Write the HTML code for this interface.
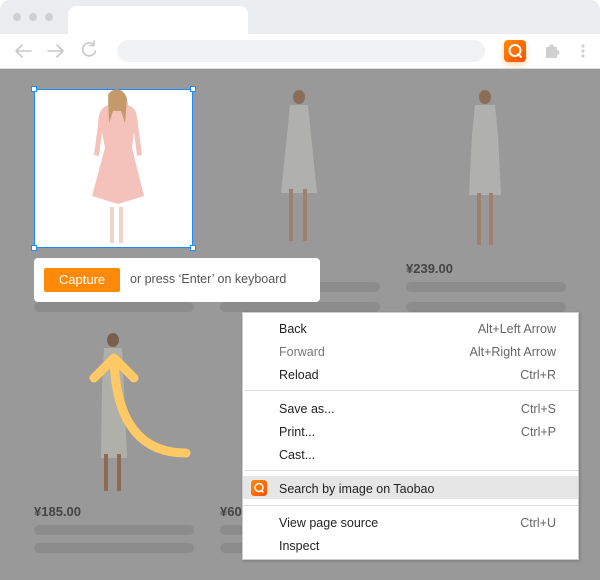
<!DOCTYPE html>
<html><head><meta charset="utf-8"><style>
*{margin:0;padding:0;box-sizing:border-box}
body{width:600px;height:580px;overflow:hidden;background:#fff;font-family:"Liberation Sans",sans-serif;position:relative}
.a{position:absolute}
.bar{position:absolute;height:10px;border-radius:5px;background:#8c8c8c}
.price{position:absolute;font-weight:bold;font-size:13px;color:#444}
.mi{position:absolute;left:279px;font-size:12.5px;color:#222}
.sc{position:absolute;right:44px;font-size:12.5px;color:#666;text-align:right}
.sep{position:absolute;left:244px;width:334px;height:1px;background:#ddd}
</style></head><body>
<div class="a" style="left:0;top:0;width:600px;height:35px;background:#ebedf1;border-radius:10px 10px 0 0"></div>
<div class="a" style="left:13px;top:13px;width:8px;height:8px;border-radius:50%;background:#cfcfd3"></div>
<div class="a" style="left:29px;top:13px;width:8px;height:8px;border-radius:50%;background:#cfcfd3"></div>
<div class="a" style="left:45px;top:13px;width:8px;height:8px;border-radius:50%;background:#cfcfd3"></div>
<div class="a" style="left:68px;top:6px;width:180px;height:30px;background:#fff;border-radius:8px 8px 0 0"></div>
<div class="a" style="left:0;top:34px;width:600px;height:35px;background:#fff;border-bottom:1px solid #ddd"></div>
<svg class="a" style="left:0;top:34px" width="600" height="35">
<g stroke="#c8c8c8" stroke-width="1.6" fill="none" stroke-linecap="round">
<path d="M16 17h15M16 17l6-6M16 17l6 6"/>
<path d="M48 17h15M63 17l-6-6M63 17l-6 6"/>
<path d="M94 11a6.5 6.5 0 1 0 1.5 6M94 7v4.5h-4.5"/>
</g>
</svg>
<div class="a" style="left:117px;top:40px;width:368px;height:22px;background:#f1f2f4;border-radius:11px"></div>
<div class="a" style="left:504px;top:40px;width:22px;height:22px;background:linear-gradient(135deg,#ff8a00,#ff5000);border-radius:4px;box-shadow:0 3px 6px rgba(255,120,0,.3)"></div>
<svg class="a" style="left:504px;top:40px" width="22" height="22"><circle cx="11" cy="10.5" r="5.5" stroke="#fff" stroke-width="2" fill="none"/><path d="M14 14l3 3" stroke="#fff" stroke-width="2" stroke-linecap="round"/></svg>
<svg class="a" style="left:540px;top:40px" width="60" height="22"><g fill="#d0d0d0"><path d="M6 7h3a2.5 2.5 0 0 1 5 0h3v3a2.5 2.5 0 0 1 0 5v3H6z"/><circle cx="43" cy="6" r="1.6"/><circle cx="43" cy="11" r="1.6"/><circle cx="43" cy="16" r="1.6"/></g></svg>
<div class="a" style="left:0;top:69px;width:600px;height:511px;background:#999"></div>
<svg class="a" style="left:0;top:69px" width="600" height="511">
<g fill="#b0b0ae"><ellipse cx="299" cy="28" rx="6" ry="7" fill="#8a6e58"/><path d="M290 36h18l3 30 6 58h-36l6-58z"/><rect x="289" y="120" width="4" height="52" fill="#9e8070"/><rect x="303" y="120" width="4" height="52" fill="#9e8070"/></g>
<g fill="#b0b0ae"><ellipse cx="485" cy="28" rx="6" ry="7" fill="#8a6e58"/><path d="M475 36h20l3 30 3 60h-32l3-60z"/><rect x="477" y="124" width="4" height="52" fill="#9e8070"/><rect x="489" y="124" width="4" height="52" fill="#9e8070"/></g>
<g fill="#b0b0aa"><ellipse cx="113" cy="271" rx="6" ry="7" fill="#7a604c"/><path d="M104 279h18l2 40 3 70h-26l1-70z"/><rect x="104" y="385" width="4" height="37" fill="#8d6a50"/><rect x="117" y="385" width="4" height="37" fill="#8d6a50"/></g>
</svg>
<div class="a" style="left:34px;top:89px;width:159px;height:159px;background:#fff;border:1.5px solid #1a8cff"></div>
<svg class="a" style="left:34px;top:89px" width="159" height="159">
<path d="M82 6c-5 0-8 4-8 10-7 3-9 6-10 20l-4 30 5 1 3-24 3 16-13 48 26 8 26-8-12-48 2-16 3 24 5-1-4-30c-1-14-3-17-10-20 0-6-3-10-8-10z" fill="#f4c2bb"/>
<path d="M74 6c4-8 16-8 19 4l-2 24-4-12-8 0-4 12z" fill="#c49a6a"/>
<rect x="76" y="118" width="4" height="36" fill="#efd4c8"/><rect x="85" y="118" width="4" height="36" fill="#efd4c8"/>
</svg>
<div class="a" style="left:31px;top:86px;width:6px;height:6px;background:#fff;border:1.5px solid #1a8cff"></div>
<div class="a" style="left:190px;top:86px;width:6px;height:6px;background:#fff;border:1.5px solid #1a8cff"></div>
<div class="a" style="left:31px;top:245px;width:6px;height:6px;background:#fff;border:1.5px solid #1a8cff"></div>
<div class="a" style="left:190px;top:245px;width:6px;height:6px;background:#fff;border:1.5px solid #1a8cff"></div>
<div class="bar" style="left:34px;top:302px;width:160px"></div>
<div class="bar" style="left:220px;top:282px;width:160px"></div>
<div class="bar" style="left:220px;top:302px;width:160px"></div>
<div class="price" style="left:406px;top:261px">¥239.00</div>
<div class="bar" style="left:406px;top:282px;width:160px"></div>
<div class="bar" style="left:406px;top:302px;width:160px"></div>
<div class="price" style="left:34px;top:504px">¥185.00</div>
<div class="bar" style="left:34px;top:525px;width:160px"></div>
<div class="bar" style="left:34px;top:543px;width:160px"></div>
<div class="price" style="left:220px;top:504px">¥60</div>
<div class="bar" style="left:220px;top:525px;width:160px"></div>
<div class="bar" style="left:220px;top:543px;width:160px"></div>
<svg class="a" style="left:80px;top:345px" width="120" height="125"><path d="M106 108c-40 0-70-24-72-94M14 33l20-20 20 20" stroke="#ffc966" stroke-width="9" fill="none" stroke-linecap="round" stroke-linejoin="round"/></svg>
<div class="a" style="left:34px;top:258px;width:286px;height:44px;background:#fff;border-radius:4px"></div>
<div class="a" style="left:44px;top:268px;width:76px;height:24px;background:#ff8a0a;border-radius:2px;color:#fff;font-size:13px;line-height:24px;text-align:center">Capture</div>
<div class="a" style="left:130px;top:272px;font-size:12.5px;color:#555">or press ‘Enter’ on keyboard</div>
<div class="a" style="left:242px;top:312px;width:337px;height:248px;background:#fff;border:1px solid #ccc;box-shadow:1px 1px 3px rgba(0,0,0,.2)"></div>
<div class="mi" style="top:322px">Back</div><div class="sc" style="top:322px">Alt+Left Arrow</div>
<div class="mi" style="top:345px;color:#777">Forward</div><div class="sc" style="top:345px">Alt+Right Arrow</div>
<div class="mi" style="top:368px">Reload</div><div class="sc" style="top:368px">Ctrl+R</div>
<div class="sep" style="top:390px"></div>
<div class="mi" style="top:402px">Save as...</div><div class="sc" style="top:402px">Ctrl+S</div>
<div class="mi" style="top:425px">Print...</div><div class="sc" style="top:425px">Ctrl+P</div>
<div class="mi" style="top:448px">Cast...</div>
<div class="sep" style="top:470px"></div>
<div class="a" style="left:243px;top:476px;width:335px;height:23px;background:#e6e6e6"></div>
<div class="a" style="left:251px;top:480px;width:16px;height:16px;background:linear-gradient(135deg,#ff8a00,#ff5000);border-radius:3px"></div>
<svg class="a" style="left:251px;top:480px" width="16" height="16"><circle cx="8" cy="7.5" r="4" stroke="#fff" stroke-width="1.5" fill="none"/><path d="M10 10l2.5 2.5" stroke="#fff" stroke-width="1.5"/></svg>
<div class="mi" style="top:482px">Search by image on Taobao</div>
<div class="sep" style="top:505px"></div>
<div class="mi" style="top:516px">View page source</div><div class="sc" style="top:516px">Ctrl+U</div>
<div class="mi" style="top:539px">Inspect</div>
</body></html>
